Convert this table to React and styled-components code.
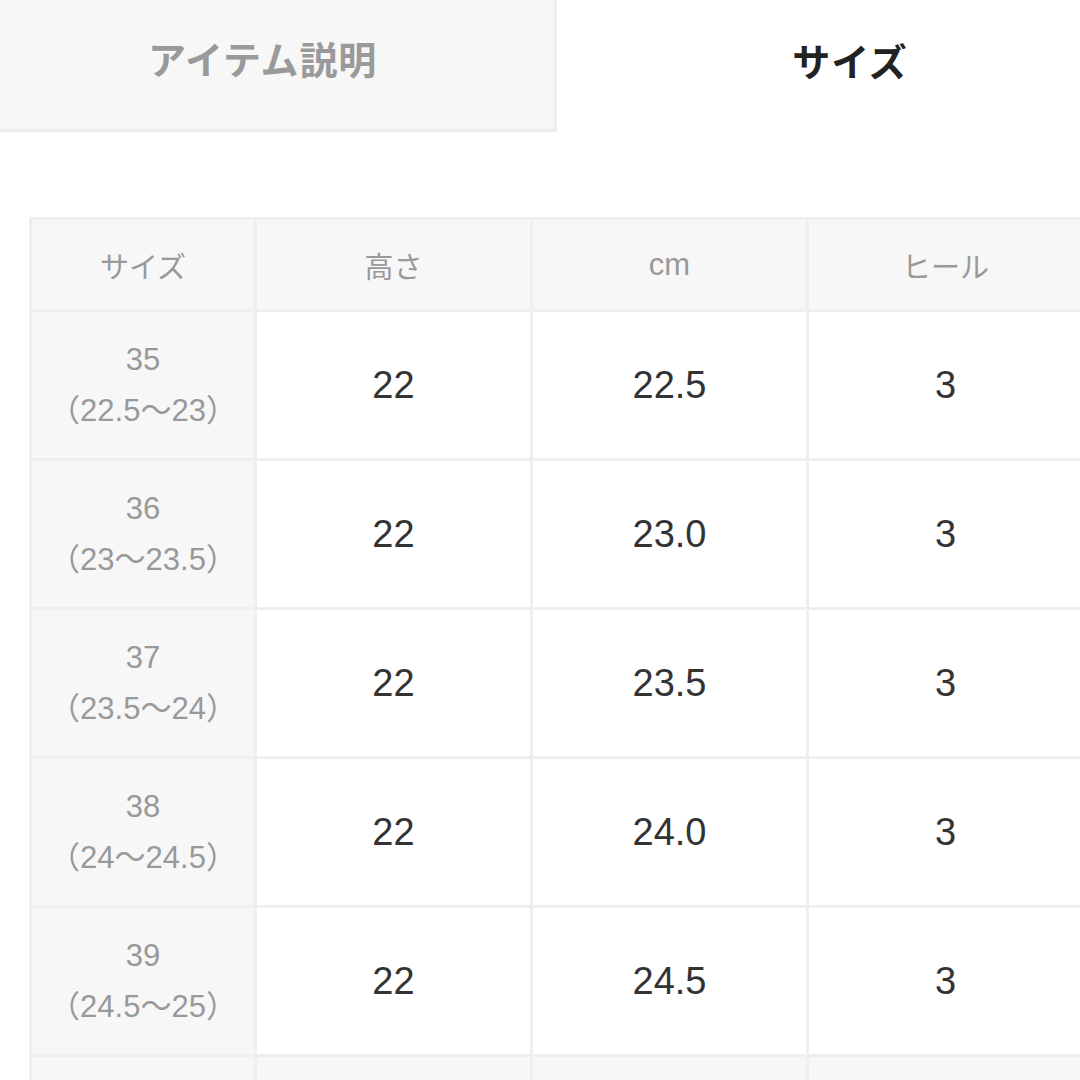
import React from "react";
import styled, { createGlobalStyle } from "styled-components";

const Global = createGlobalStyle`
  html, body { margin: 0; padding: 0; background: #fff; overflow: hidden; }
  body { font-family: "Liberation Sans", "Noto Sans CJK JP", sans-serif; }
`;

const Page = styled.div`
  width: 1172px;
  margin-left: -29px;
`;

const Tabs = styled.div`
  display: grid;
  grid-template-columns: 586px 586px;
  height: 132px;
`;

const Tab = styled.div`
  display: flex;
  align-items: center;
  justify-content: center;
  box-sizing: border-box;
  font-family: "Noto Sans CJK JP", sans-serif;
  font-size: 38px;
  font-weight: 700;
  letter-spacing: 0.8px;
  padding-bottom: 14px;
  color: ${(p) => (p.$active ? "#222" : "#9a9a9a")};
  background: ${(p) => (p.$active ? "#fff" : "#f7f7f7")};
  border-right: ${(p) => (p.$active ? "none" : "3px solid #eeeeee")};
  border-bottom: ${(p) => (p.$active ? "none" : "3px solid #eeeeee")};
`;

const TableWrap = styled.div`
  padding: 85px 57px 0 58px;
`;

const Table = styled.table`
  width: 1056px;
  table-layout: fixed;
  border-collapse: collapse;
  border: 3px solid #efefef;
`;

const Col = styled.col`
  width: ${(p) => p.$w}px;
`;

const HeadCell = styled.th`
  height: 89px;
  padding: 0;
  border: 3px solid #efefef;
  background: #f7f7f7;
  color: #999;
  font-size: 29px;
  font-weight: 400;
  text-align: center;
  vertical-align: middle;
  font-family: "Liberation Sans", "Noto Sans CJK JP", sans-serif;
`;

const UnitText = styled.span`
  font-size: 31px;
`;

const SizeCell = styled.td`
  height: 146px;
  padding: 0;
  border: 3px solid #efefef;
  background: #f7f7f7;
  color: #999;
  font-size: 31px;
  line-height: 51px;
  text-align: center;
  vertical-align: middle;
`;

const ValueCell = styled.td`
  height: 146px;
  padding: 0;
  border: 3px solid #efefef;
  background: ${(p) => (p.$muted ? "#f7f7f7" : "#fff")};
  color: #333;
  font-size: 38px;
  text-align: center;
  vertical-align: middle;
`;

const Line = styled.div``;

const rows = [
  { size: "35", range: "（22.5～23）", h: "22", cm: "22.5", heel: "3" },
  { size: "36", range: "（23～23.5）", h: "22", cm: "23.0", heel: "3" },
  { size: "37", range: "（23.5～24）", h: "22", cm: "23.5", heel: "3" },
  { size: "38", range: "（24～24.5）", h: "22", cm: "24.0", heel: "3" },
  { size: "39", range: "（24.5～25）", h: "22", cm: "24.5", heel: "3" },
];

export default function App() {
  return (
    <Page>
      <Global />
      <Tabs>
        <Tab>アイテム説明</Tab>
        <Tab $active>サイズ</Tab>
      </Tabs>
      <TableWrap>
        <Table>
          <colgroup>
            <Col $w={225} />
            <Col $w={276} />
            <Col $w={276} />
            <Col $w={276} />
          </colgroup>
          <thead>
            <tr>
              <HeadCell>サイズ</HeadCell>
              <HeadCell>高さ</HeadCell>
              <HeadCell><UnitText>cm</UnitText></HeadCell>
              <HeadCell>ヒール</HeadCell>
            </tr>
          </thead>
          <tbody>
            {rows.map((r) => (
              <tr key={r.size}>
                <SizeCell>
                  <Line>{r.size}</Line>
                  <Line>{r.range}</Line>
                </SizeCell>
                <ValueCell>{r.h}</ValueCell>
                <ValueCell>{r.cm}</ValueCell>
                <ValueCell>{r.heel}</ValueCell>
              </tr>
            ))}
            <tr>
              <SizeCell />
              <ValueCell $muted />
              <ValueCell $muted />
              <ValueCell $muted />
            </tr>
          </tbody>
        </Table>
      </TableWrap>
    </Page>
  );
}
